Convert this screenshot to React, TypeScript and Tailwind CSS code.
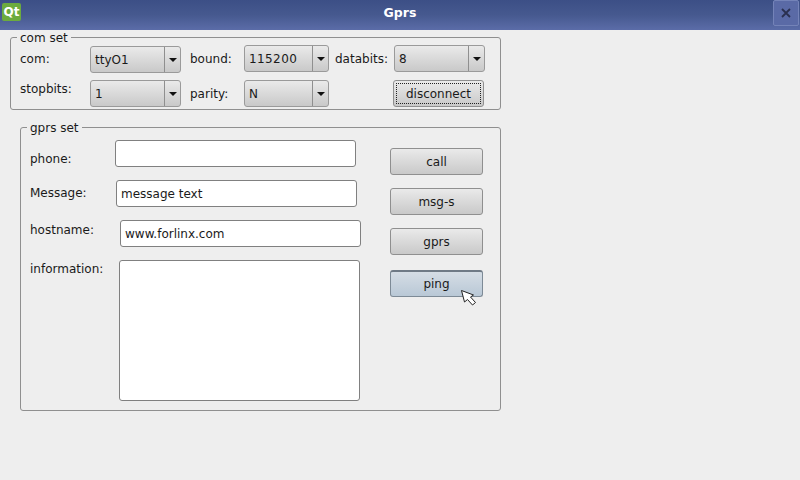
import React from "react";

const btn =
  "flex items-center justify-center h-[27px] rounded-[3px] border border-[#8f8f8f] bg-gradient-to-b from-[#eaeaea] to-[#c9c9c9] text-[#1a1a1a]";
const input = "block w-[241px] h-[27px] rounded-[3px] border border-[#808080] bg-white pl-1 leading-[26px] text-[#1a1a1a]";

function Combo({ value, className }: { value: string; className: string }) {
  return (
    <div className={`flex h-[27px] rounded-[3px] border border-[#9a9a9a] bg-gradient-to-b from-[#eaeaea] to-[#c9c9c9] text-[#1a1a1a] ${className}`}>
      <span className="flex-1 pl-1 leading-[26px]">{value}</span>
      <span className="flex w-[16px] items-center justify-center border-l border-[#8f8f8f]">
        <span className="h-0 w-0 border-x-[4px] border-t-[4px] border-x-transparent border-t-[#111]" />
      </span>
    </div>
  );
}

function Legend({ text }: { text: string }) {
  return (
    <span className="absolute left-[6px] top-[-7px] bg-[#eeeeee] px-[3px] leading-[15px] text-[#1a1a1a]">{text}</span>
  );
}

export default function App() {
  return (
    <div className="relative flex h-[480px] w-[800px] flex-col overflow-hidden bg-[#eeeeee] font-['DejaVu_Sans',sans-serif] text-[12px] text-[#1a1a1a]">
      <header className="relative flex h-[30px] shrink-0 items-center justify-center bg-gradient-to-b from-[#3c4f86] via-[#46598f] to-[#5b6ca8]">
        <div className="absolute left-[2px] top-[3px] flex h-[18px] w-[19px] items-center justify-center rounded-[2px] bg-[#6cab3e] text-[12px] font-bold leading-none text-white">
          Qt
        </div>
        <span className="mb-[4px] text-[12.5px] font-bold text-white">Gprs</span>
        <div className="absolute right-[1px] top-0 flex h-[26px] w-[26px] items-center justify-center rounded-[2px] border border-[#7483b8] bg-[#5a6aa6]">
          <svg width="12" height="12" viewBox="0 0 12 12" className="text-[#2a3050]">
            <path d="M2 2 L10 10 M10 2 L2 10" stroke="currentColor" strokeWidth="1.8" fill="none" />
          </svg>
        </div>
      </header>

      <section className="relative ml-[10px] mt-[7px] h-[73px] w-[491px] rounded-[3px] border border-[#8f8f8f]">
        <Legend text="com set" />
        <div className="ml-[9px] mt-[7px] flex items-start">
          <span className="mt-[1px] w-[70px] leading-[27px]">com:</span>
          <Combo value="ttyO1" className="mt-[1px] w-[91px]" />
          <span className="ml-[9px] mt-[1px] w-[54px] leading-[27px]">bound:</span>
          <Combo value="115200" className="w-[85px] tracking-[0.4px]" />
          <span className="ml-[6px] mt-[1px] w-[59px] leading-[27px]">databits:</span>
          <Combo value="8" className="w-[91px]" />
        </div>
        <div className="ml-[9px] mt-[7px] flex items-center">
          <span className="mb-[9px] w-[70px]">stopbits:</span>
          <Combo value="1" className="w-[91px]" />
          <span className="ml-[9px] w-[54px]">parity:</span>
          <Combo value="N" className="w-[85px]" />
          <div className={`ml-[64px] ${btn} w-[91px] p-[2px]`}>
            <span className="flex h-full w-full items-center justify-center border border-dotted border-[#222]">disconnect</span>
          </div>
        </div>
      </section>

      <section className="relative ml-[20px] mt-[17px] flex h-[284px] w-[481px] rounded-[3px] border border-[#8f8f8f]">
        <Legend text="gprs set" />
        <div className="w-[369px] pl-[9px]">
          <div className="mt-[12px] flex items-center">
            <span className="w-[85px] translate-y-[5px]">phone:</span>
            <div className={input} />
          </div>
          <div className="mt-[13px] flex items-center">
            <span className="mb-[2px] w-[86px]">Message:</span>
            <div className={input}>message text</div>
          </div>
          <div className="mt-[13px] flex items-center">
            <span className="mb-[7px] w-[90px]">hostname:</span>
            <div className={input}>www.forlinx.com</div>
          </div>
          <div className="mt-[13px] flex items-start">
            <span className="w-[89px]">information:</span>
            <div className="h-[141px] w-[241px] rounded-[3px] border border-[#808080] bg-white" />
          </div>
        </div>
        <div className="flex flex-col">
          <div className={`mt-[20px] w-[93px] ${btn}`}>call</div>
          <div className={`mt-[13px] w-[93px] ${btn}`}>msg-s</div>
          <div className={`mt-[13px] w-[93px] ${btn}`}>gprs</div>
          <div className="mt-[15px] flex h-[27px] w-[93px] items-center justify-center rounded-[3px] border border-[#7d8a96] border-t-2 border-t-[#6f7a86] bg-gradient-to-b from-[#d5dde5] to-[#b9c8d6]">ping</div>
        </div>
      </section>

      <svg width="18" height="18" viewBox="0 0 18 18" className="absolute left-[460px] top-[289px]">
        <path d="M1.5 1.5 L4.5 13 L7.5 10.5 L12.5 16 L15.5 13.5 L10.5 8 L13.5 6 Z" fill="white" stroke="#222" strokeWidth="1" strokeLinejoin="round" />
      </svg>
    </div>
  );
}
